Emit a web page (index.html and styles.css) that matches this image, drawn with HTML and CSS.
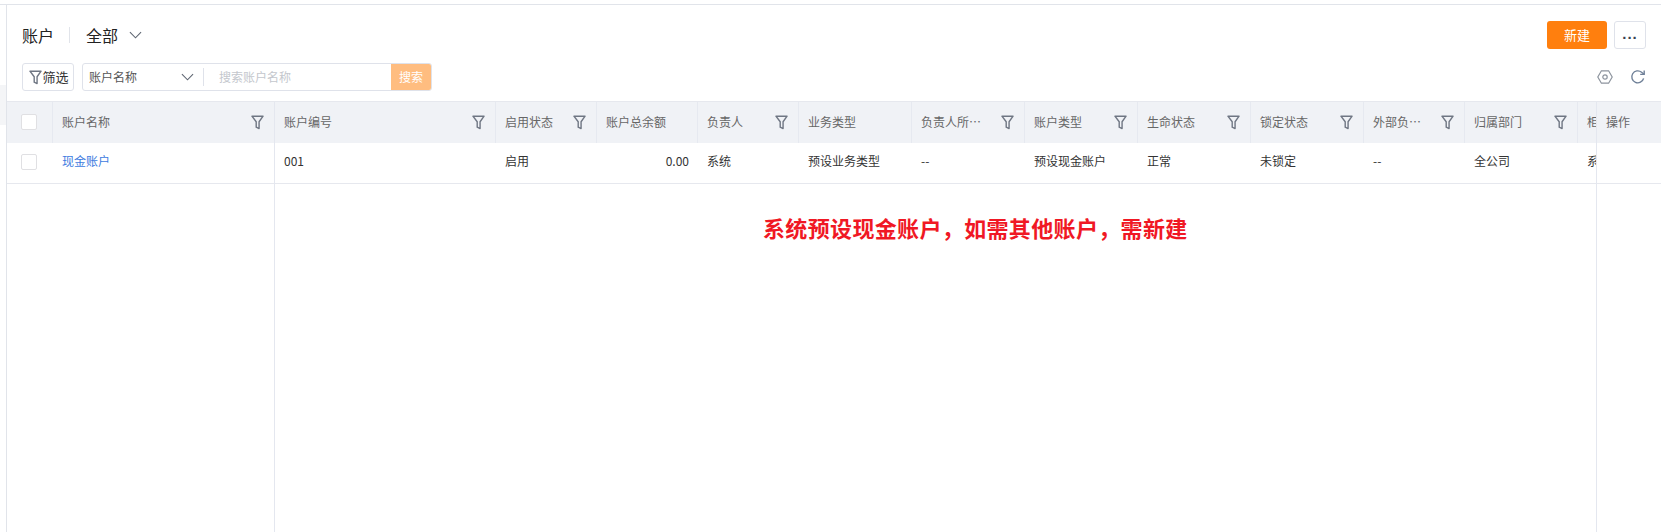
FILE: index.html
```html
<!DOCTYPE html>
<html lang="zh-CN">
<head>
<meta charset="utf-8">
<title>账户</title>
<link rel="stylesheet" href="styles.css">
</head>
<body>
<svg class="defs" width="0" height="0" aria-hidden="true">
  <symbol id="funnel" viewBox="0 0 14 16">
    <path d="M1 1.2h12L8.7 7.2v7.3L5.6 13V7.2z" fill="none" stroke="currentColor" stroke-width="1.5" stroke-linejoin="round"/>
  </symbol>
</svg>
<div class="page">
  <div class="gutter"><div class="gutter-band"></div></div>
  <main class="panel">
    <header class="titlebar">
      <div class="title-left">
        <h1 class="title">账户</h1>
        <span class="title-sep"></span>
        <span class="view">全部</span>
        <svg class="chev view-chev" viewBox="0 0 14 8"><path d="M1 1l6 6 6-6" fill="none" stroke="currentColor" stroke-width="1.2"/></svg>
      </div>
      <div class="title-actions">
        <button class="btn-new">新建</button>
        <button class="btn-more">...</button>
      </div>
    </header>
    <div class="toolbar">
      <button class="btn-filter"><svg class="ficon"><use href="#funnel"/></svg>筛选</button>
      <div class="search">
        <div class="search-field">账户名称<svg class="chev field-chev" viewBox="0 0 14 8"><path d="M1 1l6 6 6-6" fill="none" stroke="currentColor" stroke-width="1.2"/></svg></div>
        <span class="search-sep"></span>
        <span class="search-input">搜索账户名称</span>
        <button class="search-btn">搜索</button>
      </div>
      <div class="tools">
        <svg class="tool" viewBox="0 0 16 16"><path d="M4.4 1.8h7.2L15.2 8l-3.6 6.2H4.4L.8 8z" fill="none" stroke="#8d949e" stroke-width="1.2"/><circle cx="8" cy="8" r="2.2" fill="none" stroke="#8d949e" stroke-width="1.2"/></svg>
        <svg class="tool" viewBox="0 0 16 16"><path d="M13.6 9.4A6 6 0 1 1 11.6 3.2L14 5.2" fill="none" stroke="#6f8098" stroke-width="1.4"/><path d="M14.2 1.4v4h-4" fill="none" stroke="#6f8098" stroke-width="1.4"/></svg>
      </div>
    </div>
    <div class="table">
      <section class="frozen">
        <div class="row head">
          <div class="cell c-check"><span class="checkbox"></span></div>
          <div class="cell c-name">账户名称<svg class="ficon end"><use href="#funnel"/></svg></div>
        </div>
        <div class="row data">
          <div class="cell c-check"><span class="checkbox"></span></div>
          <div class="cell c-name"><a class="link">现金账户</a></div>
        </div>
      </section>
      <section class="scroll">
        <div class="row head">
          <div class="cell w221">账户编号<svg class="ficon end"><use href="#funnel"/></svg></div>
          <div class="cell w101">启用状态<svg class="ficon end"><use href="#funnel"/></svg></div>
          <div class="cell w101">账户总余额</div>
          <div class="cell w101">负责人<svg class="ficon end"><use href="#funnel"/></svg></div>
          <div class="cell w113">业务类型</div>
          <div class="cell w113"><span class="clip">负责人所属部门</span><svg class="ficon end"><use href="#funnel"/></svg></div>
          <div class="cell w113">账户类型<svg class="ficon end"><use href="#funnel"/></svg></div>
          <div class="cell w113">生命状态<svg class="ficon end"><use href="#funnel"/></svg></div>
          <div class="cell w113">锁定状态<svg class="ficon end"><use href="#funnel"/></svg></div>
          <div class="cell w101"><span class="clip">外部负责人</span><svg class="ficon end"><use href="#funnel"/></svg></div>
          <div class="cell w113">归属部门<svg class="ficon end"><use href="#funnel"/></svg></div>
          <div class="cell w113">柜台</div>
        </div>
        <div class="row data">
          <div class="cell w221">001</div>
          <div class="cell w101">启用</div>
          <div class="cell w101 num">0.00</div>
          <div class="cell w101">系统</div>
          <div class="cell w113">预设业务类型</div>
          <div class="cell w113">--</div>
          <div class="cell w113">预设现金账户</div>
          <div class="cell w113">正常</div>
          <div class="cell w113">未锁定</div>
          <div class="cell w101">--</div>
          <div class="cell w113">全公司</div>
          <div class="cell w113">系统</div>
        </div>
      </section>
      <section class="ops">
        <div class="row head"><div class="cell c-op">操作</div></div>
        <div class="row data"><div class="cell c-op"></div></div>
      </section>
      <p class="note">系统预设现金账户，如需其他账户，需新建</p>
    </div>
  </main>
</div>
</body>
</html>
```
FILE: styles.css
```css
* { box-sizing: border-box; }
html, body { margin: 0; height: 100%; }
body {
  overflow: hidden;
  background: #fff;
  color: #333;
  font: 12px/1.4 "Noto Sans CJK SC", "Liberation Sans", sans-serif;
}
.defs { position: absolute; }
button { font: inherit; cursor: pointer; padding: 0; }
.page {
  display: flex;
  height: 100%;
  padding-top: 4px;
}
.gutter { width: 6px; border-top: 1px solid #e1e4ea; padding-top: 80px; }
.gutter-band { height: 40px; background: #f4f5f7; }
.panel {
  flex: 1;
  min-width: 0;
  display: flex;
  flex-direction: column;
  border-top: 1px solid #e1e4ea;
  border-left: 1px solid #e1e4ea;
}
.titlebar {
  display: flex;
  align-items: center;
  justify-content: space-between;
  height: 44px;
  padding: 16px 15px 0 15px;
}
.title-left { display: flex; align-items: center; }
.title { margin: 0; font-size: 16px; font-weight: 400; color: #222; }
.title-sep { width: 1px; height: 16px; margin: 0 16px 0 15px; background: #e1e4ea; }
.view { font-size: 16px; color: #222; }
.chev { display: block; color: #5f6672; }
.view-chev { width: 13px; height: 8px; margin-left: 11px; }
.title-actions { display: flex; gap: 7px; }
.btn-new {
  width: 60px; height: 28px;
  border: 0; border-radius: 3px;
  background: #ff7f0e; color: #fff;
  font-size: 13px;
}
.btn-more {
  width: 32px; height: 28px;
  padding-bottom: 3px;
  border: 1px solid #dfe2ea; border-radius: 3px;
  background: #fff; color: #3a4150;
  font: 700 15px/1 "Liberation Sans", sans-serif;
  letter-spacing: 1px;
}
.toolbar {
  display: flex;
  align-items: center;
  height: 28px;
  margin-top: 14px;
  padding: 0 15px;
}
.btn-filter {
  display: flex; align-items: center; justify-content: center;
  width: 52px; height: 28px;
  padding-left: 2px;
  border: 1px solid #dfe2ea; border-radius: 3px;
  background: #fff; color: #333;
  font-size: 13px;
}
.ficon { width: 13px; height: 15px; color: #6f7683; flex: none; }
.search {
  display: flex; align-items: center;
  width: 350px; height: 28px;
  margin-left: 8px;
  border: 1px solid #dfe2ea; border-radius: 3px;
}
.search-field {
  display: flex; align-items: center; justify-content: space-between;
  width: 112px;
  padding-left: 6px;
  color: #555;
}
.field-chev { width: 13px; height: 8px; margin-right: 1px; }
.search-sep { width: 1px; height: 18px; margin-left: 8px; background: #dfe2ea; }
.search-input { flex: 1; padding-left: 15px; color: #c4c7cd; }
.search-btn {
  align-self: stretch;
  width: 40px;
  border: 0;
  border-radius: 0 2px 2px 0;
  background: #ffbd80; color: #fff;
}
.tools { display: flex; gap: 17px; margin-left: auto; }
.tool { width: 16px; height: 16px; display: block; }
.table {
  position: relative;
  flex: 1;
  display: flex;
  min-height: 0;
  margin-top: 10px;
  border-top: 1px solid #e6e8ee;
}
.frozen { width: 268px; flex: none; border-right: 1px solid #e4e7ef; }
.scroll { flex: 1; min-width: 0; overflow: hidden; }
.ops { width: 65px; flex: none; border-left: 1px solid #e4e7ef; }
.row { display: flex; }
.head { height: 41px; background: #f0f2f6; color: #666; }
.data { height: 41px; border-bottom: 1px solid #e6e8ee; color: #333; }
.cell {
  flex: none;
  display: flex;
  align-items: center;
  padding: 0 10px 0 9px;
  min-width: 0;
}
.head .cell { border-right: 1px solid #e6e9f0; padding-bottom: 1px; }
.head .cell:last-child { border-right: 0; }
.data .cell { padding-top: 0; padding-bottom: 3px; }
.c-check { width: 46px; padding: 0 0 0 14px; }
.c-name { flex: 1; }
.c-op { flex: 1; padding-left: 9px; }
.checkbox {
  display: block;
  width: 16px; height: 16px;
  background: #fff;
  border: 1px solid #e0e0e3; border-radius: 2px;
}
.link { color: #3d7be0; }
.w221 { width: 221px; }
.w113 { width: 113px; }
.w101 { width: 101px; }
.num { justify-content: flex-end; padding-right: 9px; }
.end { margin-left: auto; margin-right: 0; }
.clip { flex: 1; min-width: 0; overflow: hidden; white-space: nowrap; text-overflow: ellipsis; padding-right: 12px; }
.note {
  position: absolute;
  left: 756px;
  top: 111px;
  margin: 0;
  color: #f01824;
  font-size: 22px;
  font-weight: 700;
  line-height: 28px;
  letter-spacing: .35px;
  white-space: nowrap;
}
```
